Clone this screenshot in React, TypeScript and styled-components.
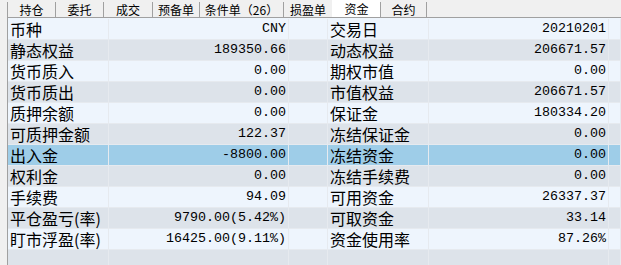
import React from "react";
import styled, { createGlobalStyle } from "styled-components";

const Global = createGlobalStyle`
  html, body { margin: 0; padding: 0; background: #f0f0f0; }
  body { width: 621px; height: 265px; overflow: hidden; }
`;

const Page = styled.div`
  width: 621px;
  height: 265px;
  background: #f0f0f0;
  overflow: hidden;
  display: flex;
  flex-direction: column;
`;

const TabBar = styled.div`
  height: 22px;
  padding-left: 7px;
  display: flex;
  align-items: flex-end;
  font-family: "Noto Sans CJK SC", "Noto Sans", sans-serif;
  font-size: 12px;
  color: #000;
`;

const Tab = styled.div<{ $w: number; $active?: boolean; $last?: boolean }>`
  box-sizing: border-box;
  width: ${(p) => p.$w}px;
  height: ${(p) => (p.$active ? 17 : 15)}px;
  display: flex;
  align-items: center;
  justify-content: center;
  padding-top: ${(p) => (p.$active ? 1 : 0)}px;
  background: ${(p) => (p.$active ? "#ffffff" : "transparent")};
  border-left: 1px solid ${(p) => (p.$active ? "transparent" : "#a0a0a0")};
  border-right: ${(p) => (p.$last ? "1px solid #a0a0a0" : "none")};
  line-height: 14px;
  white-space: nowrap;
`;

const Table = styled.div`
  margin-left: 7px;
  border-left: 1px solid #a0a0a0;
  border-top: 1px solid #a0a0a0;
  padding-top: 1px;
  background: #eef5fd;
  flex: 1;
  display: flex;
  flex-direction: column;
`;

const Row = styled.div<{ $tone: "light" | "grey" | "sel" }>`
  box-sizing: border-box;
  height: 21px;
  flex-shrink: 0;
  display: grid;
  grid-template-columns: 101px 180px 39px 101px 180px 1fr;
  border-bottom: 1px solid #e6eaef;
  background: ${(p) =>
    p.$tone === "sel" ? "#9ecde8" : p.$tone === "grey" ? "#dde3ea" : "#eef5fd"};
`;

const Label = styled.div`
  border-right: 1px solid #e6eaef;
  padding-left: 2px;
  font-family: "Noto Sans CJK SC", "Noto Sans", sans-serif;
  font-size: 16px;
  line-height: 20px;
  color: #000;
  white-space: nowrap;
`;

const Value = styled.div`
  border-right: 1px solid #e6eaef;
  padding-right: 2px;
  text-align: right;
  font-family: "Liberation Mono", "DejaVu Sans Mono", monospace;
  font-size: 13.33px;
  line-height: 20px;
  color: #000;
  white-space: nowrap;
`;

const Spacer = styled.div`
  border-right: 1px solid #e6eaef;
`;

const tabs: { name: string; w: number; active?: boolean }[] = [
  { name: "持仓", w: 48 },
  { name: "委托", w: 48 },
  { name: "成交", w: 49 },
  { name: "预备单", w: 47 },
  { name: "条件单（26）", w: 84 },
  { name: "损盈单", w: 49 },
  { name: "资金", w: 48, active: true },
  { name: "合约", w: 47 },
];

const rows: [string, string, string, string][] = [
  ["币种", "CNY", "交易日", "20210201"],
  ["静态权益", "189350.66", "动态权益", "206671.57"],
  ["货币质入", "0.00", "期权市值", "0.00"],
  ["货币质出", "0.00", "市值权益", "206671.57"],
  ["质押余额", "0.00", "保证金", "180334.20"],
  ["可质押金额", "122.37", "冻结保证金", "0.00"],
  ["出入金", "-8800.00", "冻结资金", "0.00"],
  ["权利金", "0.00", "冻结手续费", "0.00"],
  ["手续费", "94.09", "可用资金", "26337.37"],
  ["平仓盈亏(率)", "9790.00(5.42%)", "可取资金", "33.14"],
  ["盯市浮盈(率)", "16425.00(9.11%)", "资金使用率", "87.26%"],
  ["", "", "", ""],
];

export default function App() {
  return (
    <Page>
      <Global />
      <TabBar>
        {tabs.map((t, i) => (
          <Tab key={t.name} $w={t.w} $active={t.active} $last={i === tabs.length - 1}>
            {t.name}
          </Tab>
        ))}
      </TabBar>
      <Table>
        {rows.map((r, i) => (
          <Row key={i} $tone={i === 6 ? "sel" : i % 2 === 1 ? "grey" : "light"}>
            <Label>{r[0]}</Label>
            <Value>{r[1]}</Value>
            <Spacer />
            <Label>{r[2]}</Label>
            <Value>{r[3]}</Value>
            <Spacer />
          </Row>
        ))}
      </Table>
    </Page>
  );
}
